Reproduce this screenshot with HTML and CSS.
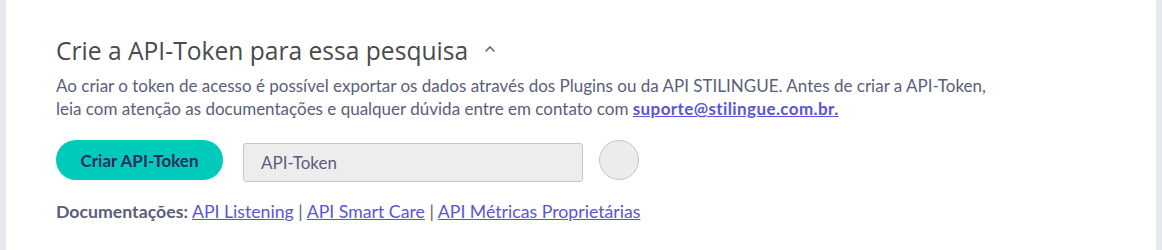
FILE: index.html
```html
<!DOCTYPE html>
<html lang="pt-BR">
<head>
<meta charset="utf-8">
<link rel="stylesheet" href="styles.css">
</head>
<body>
<div class="panel">
  <h2 class="title"><span>Crie a API-Token para essa pesquisa</span><span class="caret">
    <svg width="12" height="8" viewBox="0 0 12 8"><path d="M1.5 6.5 L6 2 L10.5 6.5" fill="none" stroke="#6b6b6b" stroke-width="1.6"/></svg>
  </span></h2>
  <p class="desc">Ao criar o token de acesso é possível exportar os dados através dos Plugins ou da API STILINGUE. Antes de criar a API-Token,<br>leia com atenção as documentações e qualquer dúvida entre em contato com <a class="mail" href="#">suporte@stilingue.com.br.</a></p>
  <div class="row">
    <button class="btn">Criar API-Token</button>
    <div class="field">API-Token</div>
    <div class="circle"></div>
  </div>
  <p class="docs"><b>Documentações:</b> <a href="#">API Listening</a> | <a href="#">API Smart Care</a> | <a href="#">API Métricas Proprietárias</a></p>
</div>
</body>
</html>
```
FILE: styles.css
```css
html, body {
  margin: 0;
  padding: 0;
  background: #e5e8ec;
}
.panel {
  margin: 0 6px;
  height: 250px;
  background: #ffffff;
  padding: 34px 0 0 50px;
  box-sizing: border-box;
  font-family: Lato, "Open Sans", sans-serif;
  color: #5b5e78;
}
.title {
  margin: 0;
  font-family: "Open Sans", sans-serif;
  font-weight: 500;
  font-size: 24.6px;
  line-height: 34px;
  color: #4a4a4a;
  display: flex;
  align-items: center;
}
.caret {
  display: inline-flex;
  margin-left: 16px;
  margin-top: -4px;
}
.desc {
  margin: 6px 0 0 0;
  font-size: 17px;
  line-height: 23px;
}
.mail {
  color: #5a55d8;
  font-weight: 700;
  letter-spacing: 0.4px;
}
.row {
  display: flex;
  align-items: flex-start;
  margin-top: 20px;
}
.btn {
  width: 167px;
  height: 40px;
  border: none;
  border-radius: 20px;
  background: #00cbbb;
  color: #2a2d5a;
  font-family: Lato, sans-serif;
  font-weight: 700;
  font-size: 17px;
  padding: 0;
}
.field {
  margin-left: 20px;
  margin-top: 3px;
  width: 340px;
  height: 39px;
  box-sizing: border-box;
  border: 1px solid #c6c6c6;
  border-radius: 3px;
  background: #ededed;
  padding-left: 17px;
  line-height: 37px;
  font-size: 17px;
  color: #5b5e78;
}
.circle {
  margin-left: 16px;
  width: 40px;
  height: 40px;
  box-sizing: border-box;
  border: 1px solid #c6c6c6;
  border-radius: 50%;
  background: #ececec;
}
.docs {
  margin: 19px 0 0 0;
  font-size: 17.7px;
  line-height: 22px;
}
.docs b {
  font-weight: 700;
  color: #5b5e78;
}
.docs a {
  color: #5a55d8;
}
```
